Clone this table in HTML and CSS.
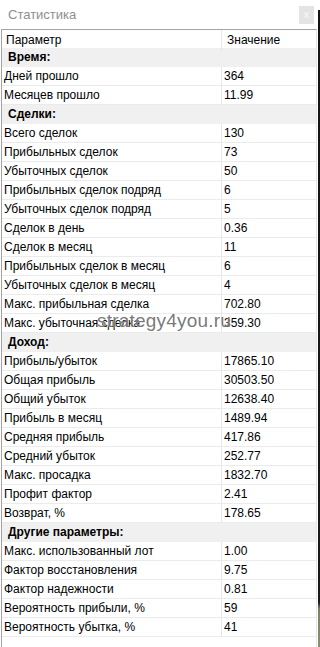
FILE: index.html
```html
<!DOCTYPE html>
<html lang="ru">
<head>
<meta charset="utf-8">
<title>Статистика</title>
<link rel="stylesheet" href="styles.css">
</head>
<body>
<div class="window">
  <div class="panel">
    <div class="titlebar">
      <span class="title">Статистика</span>
      <span class="close">x</span>
    </div>
    <div class="frame">
      <div class="row head"><span class="p">Параметр</span><span class="v">Значение</span></div>
      <div class="row group">Время:</div>
      <div class="row"><span class="p">Дней прошло</span><span class="v">364</span></div>
      <div class="row"><span class="p">Месяцев прошло</span><span class="v">11.99</span></div>
      <div class="row group">Сделки:</div>
      <div class="row"><span class="p">Всего сделок</span><span class="v">130</span></div>
      <div class="row"><span class="p">Прибыльных сделок</span><span class="v">73</span></div>
      <div class="row"><span class="p">Убыточных сделок</span><span class="v">50</span></div>
      <div class="row"><span class="p">Прибыльных сделок подряд</span><span class="v">6</span></div>
      <div class="row"><span class="p">Убыточных сделок подряд</span><span class="v">5</span></div>
      <div class="row"><span class="p">Сделок в день</span><span class="v">0.36</span></div>
      <div class="row"><span class="p">Сделок в месяц</span><span class="v">11</span></div>
      <div class="row"><span class="p">Прибыльных сделок в месяц</span><span class="v">6</span></div>
      <div class="row"><span class="p">Убыточных сделок в месяц</span><span class="v">4</span></div>
      <div class="row"><span class="p">Макс. прибыльная сделка</span><span class="v">702.80</span></div>
      <div class="row"><span class="p">Макс. убыточная сделка</span><span class="v">359.30</span></div>
      <div class="row group">Доход:</div>
      <div class="row"><span class="p">Прибыль/убыток</span><span class="v">17865.10</span></div>
      <div class="row"><span class="p">Общая прибыль</span><span class="v">30503.50</span></div>
      <div class="row"><span class="p">Общий убыток</span><span class="v">12638.40</span></div>
      <div class="row"><span class="p">Прибыль в месяц</span><span class="v">1489.94</span></div>
      <div class="row"><span class="p">Средняя прибыль</span><span class="v">417.86</span></div>
      <div class="row"><span class="p">Средний убыток</span><span class="v">252.77</span></div>
      <div class="row"><span class="p">Макс. просадка</span><span class="v">1832.70</span></div>
      <div class="row"><span class="p">Профит фактор</span><span class="v">2.41</span></div>
      <div class="row"><span class="p">Возврат, %</span><span class="v">178.65</span></div>
      <div class="row group">Другие параметры:</div>
      <div class="row"><span class="p">Макс. использованный лот</span><span class="v">1.00</span></div>
      <div class="row"><span class="p">Фактор восстановления</span><span class="v">9.75</span></div>
      <div class="row"><span class="p">Фактор надежности</span><span class="v">0.81</span></div>
      <div class="row"><span class="p">Вероятность прибыли, %</span><span class="v">59</span></div>
      <div class="row"><span class="p">Вероятность убытка, %</span><span class="v">41</span></div>
      <div class="watermark">strategy4you.ru</div>
    </div>
  </div>
  <div class="edge"></div>
</div>
</body>
</html>
```
FILE: styles.css
```css
html, body {
  margin: 0;
  padding: 0;
  background: #ffffff;
}
body {
  font-family: "Liberation Sans", Arial, sans-serif;
  font-size: 12px;
  color: #000;
}
.window {
  display: flex;
  width: 320px;
  height: 647px;
  overflow: hidden;
}
.panel {
  width: 318px;
  display: flex;
  flex-direction: column;
}
.titlebar {
  height: 29px;
  display: flex;
  align-items: center;
  justify-content: space-between;
  padding-left: 8px;
  padding-right: 4px;
}
.title {
  font-family: "Liberation Sans", Arial, sans-serif;
  font-size: 13px;
  color: #8e8e8e;
}
.close {
  width: 15px;
  height: 18px;
  margin-top: 1px;
  background: #e4e4e4;
  color: #f8f8f8;
  font-size: 11px;
  line-height: 17px;
  text-align: center;
}
.frame {
  position: relative;
  flex: 1;
  margin-left: 1px;
  width: 314px;
  border-top: 1px solid #a3a3a3;
  border-left: 1px solid #a3a3a3;
  border-right: 1px solid #e6e6e6;
}
.row {
  display: grid;
  grid-template-columns: 220px 1fr;
  height: 18px;
  line-height: 18px;
  border-bottom: 1px solid #ebebeb;
  white-space: nowrap;
}
.row .p {
  padding-left: 2px;
  border-right: 1px solid #e6e6e6;
}
.row .v {
  padding-left: 2px;
}
.row.head {
  height: 17px;
  line-height: 21px;
  border-bottom: 1px solid #ffffff;
}
.row.head .p {
  padding-left: 4px;
}
.row.head .v {
  padding-left: 5px;
}
.row.group {
  display: block;
  background: #f0f0f0;
  font-weight: bold;
  padding-left: 6px;
  border-bottom: 1px solid #f0f0f0;
}
.watermark {
  position: absolute;
  left: 95px;
  top: 280px;
  font-size: 19px;
  letter-spacing: 0.2px;
  color: rgba(85, 85, 85, 0.8);
  text-shadow: 0 0 1px #ffffff;
  pointer-events: none;
}
.edge {
  width: 2px;
  margin-top: 10px;
  background: linear-gradient(#141414 0%, #1a1a1a 93%, #7d825e 94%, #8a8f6e 100%);
}
```
